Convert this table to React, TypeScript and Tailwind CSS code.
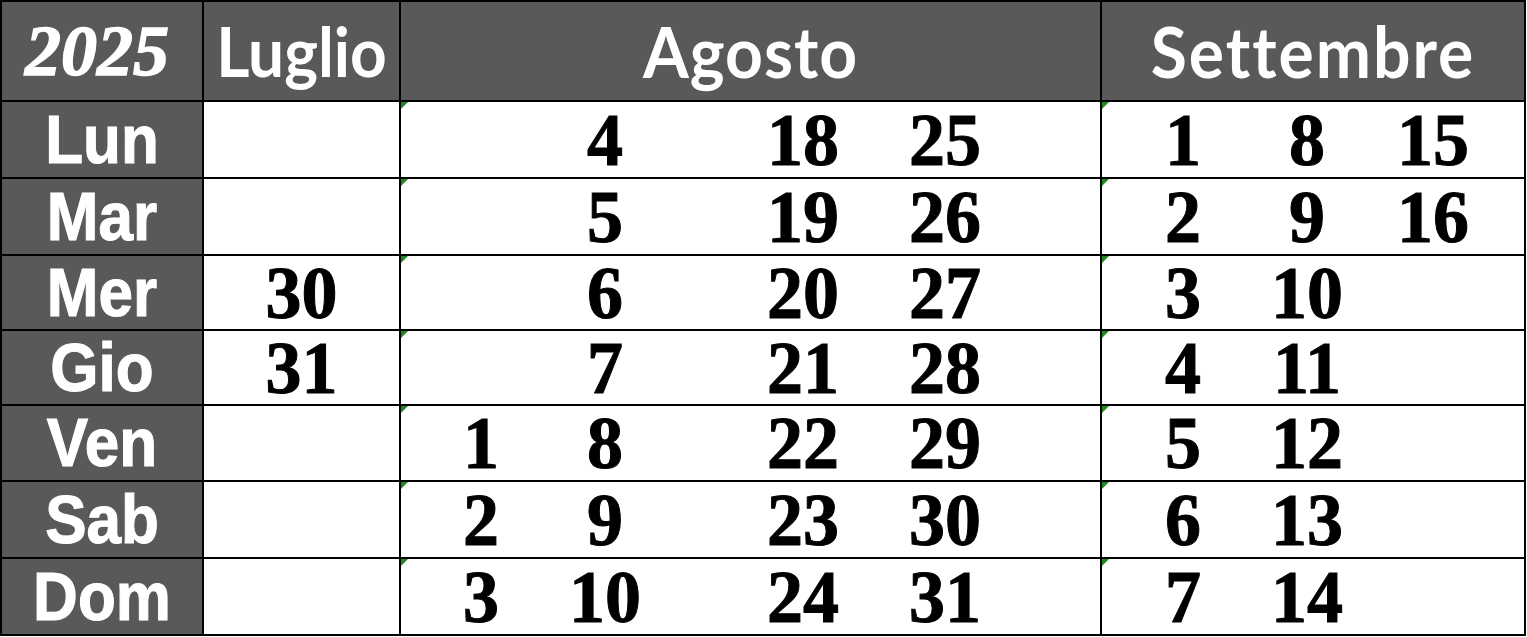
const AGOSTO: (number | null)[][] = [
  [null, 4, 18, 25],
  [null, 5, 19, 26],
  [null, 6, 20, 27],
  [null, 7, 21, 28],
  [1, 8, 22, 29],
  [2, 9, 23, 30],
  [3, 10, 24, 31],
];

const SETTEMBRE: (number | null)[][] = [
  [1, 8, 15],
  [2, 9, 16],
  [3, 10, null],
  [4, 11, null],
  [5, 12, null],
  [6, 13, null],
  [7, 14, null],
];

const LUGLIO: (number | null)[] = [null, null, 30, 31, null, null, null];
const DAYS = ["Lun", "Mar", "Mer", "Gio", "Ven", "Sab", "Dom"];

const serif = "font-['Liberation_Serif',serif]";
const num = `${serif} text-[72px] font-bold leading-none text-black scale-y-[1.03] [-webkit-text-stroke:1px_black]`;
const head = "font-['Lato',sans-serif] font-bold leading-none text-white scale-y-[1.08]";

// Excel's little green "number stored as text" flag
function Flag() {
  return (
    <span className="absolute left-0 top-0 h-0 w-0 border-r-[7px] border-t-[7px] border-r-transparent border-t-[#1e8a1e]" />
  );
}

function Num({ n }: { n: number | null }) {
  return (
    <span className="flex w-[120px] shrink-0 justify-center">
      {n !== null && <span className={num}>{n}</span>}
    </span>
  );
}

export default function App() {
  return (
    <div className="min-h-[637px] w-[1527px] bg-white">
      <div className="grid w-[1526px] grid-cols-[200px_195px_699px_422px] grid-rows-[98px_75px_75px_73px_73px_74px_75px_75px] gap-[2px] bg-black p-[2px]">
        {/* header */}
        <div className="flex items-center justify-center bg-[#595959] pr-[10px]">
          <span className={`${serif} text-[72px] font-bold italic leading-none text-white [-webkit-text-stroke:1.5px_white]`}>2025</span>
        </div>
        <div className="flex items-center justify-center bg-[#595959]">
          <span className={`${head} text-[64px]`}>Luglio</span>
        </div>
        <div className="flex items-center justify-center bg-[#595959]">
          <span className={`${head} text-[66px] tracking-[1px]`}>Agosto</span>
        </div>
        <div className="flex items-center justify-center bg-[#595959]">
          <span className={`${head} text-[66px] tracking-[2px]`}>Settembre</span>
        </div>

        {DAYS.map((d, i) => (
          <div key={d} className="contents">
            <div className="flex items-center justify-center bg-[#595959]">
              <span className="font-['Liberation_Sans',sans-serif] text-[62px] font-bold leading-none text-white scale-y-[1.1] [-webkit-text-stroke:1px_white]">{d}</span>
            </div>
            <div className="flex items-center justify-center bg-white">
              {LUGLIO[i] !== null && <span className={num}>{LUGLIO[i]}</span>}
            </div>
            <div className="relative flex items-center bg-white pl-[20px]">
              <Flag />
              <Num n={AGOSTO[i][0]} />
              <span className="ml-[4px]" />
              <Num n={AGOSTO[i][1]} />
              <span className="ml-[78px]" />
              <Num n={AGOSTO[i][2]} />
              <span className="ml-[22px]" />
              <Num n={AGOSTO[i][3]} />
            </div>
            <div className="relative flex items-center bg-white pl-[21px]">
              <Flag />
              <Num n={SETTEMBRE[i][0]} />
              <span className="ml-[4px]" />
              <Num n={SETTEMBRE[i][1]} />
              <span className="ml-[6px]" />
              <Num n={SETTEMBRE[i][2]} />
            </div>
          </div>
        ))}
      </div>
    </div>
  );
}
